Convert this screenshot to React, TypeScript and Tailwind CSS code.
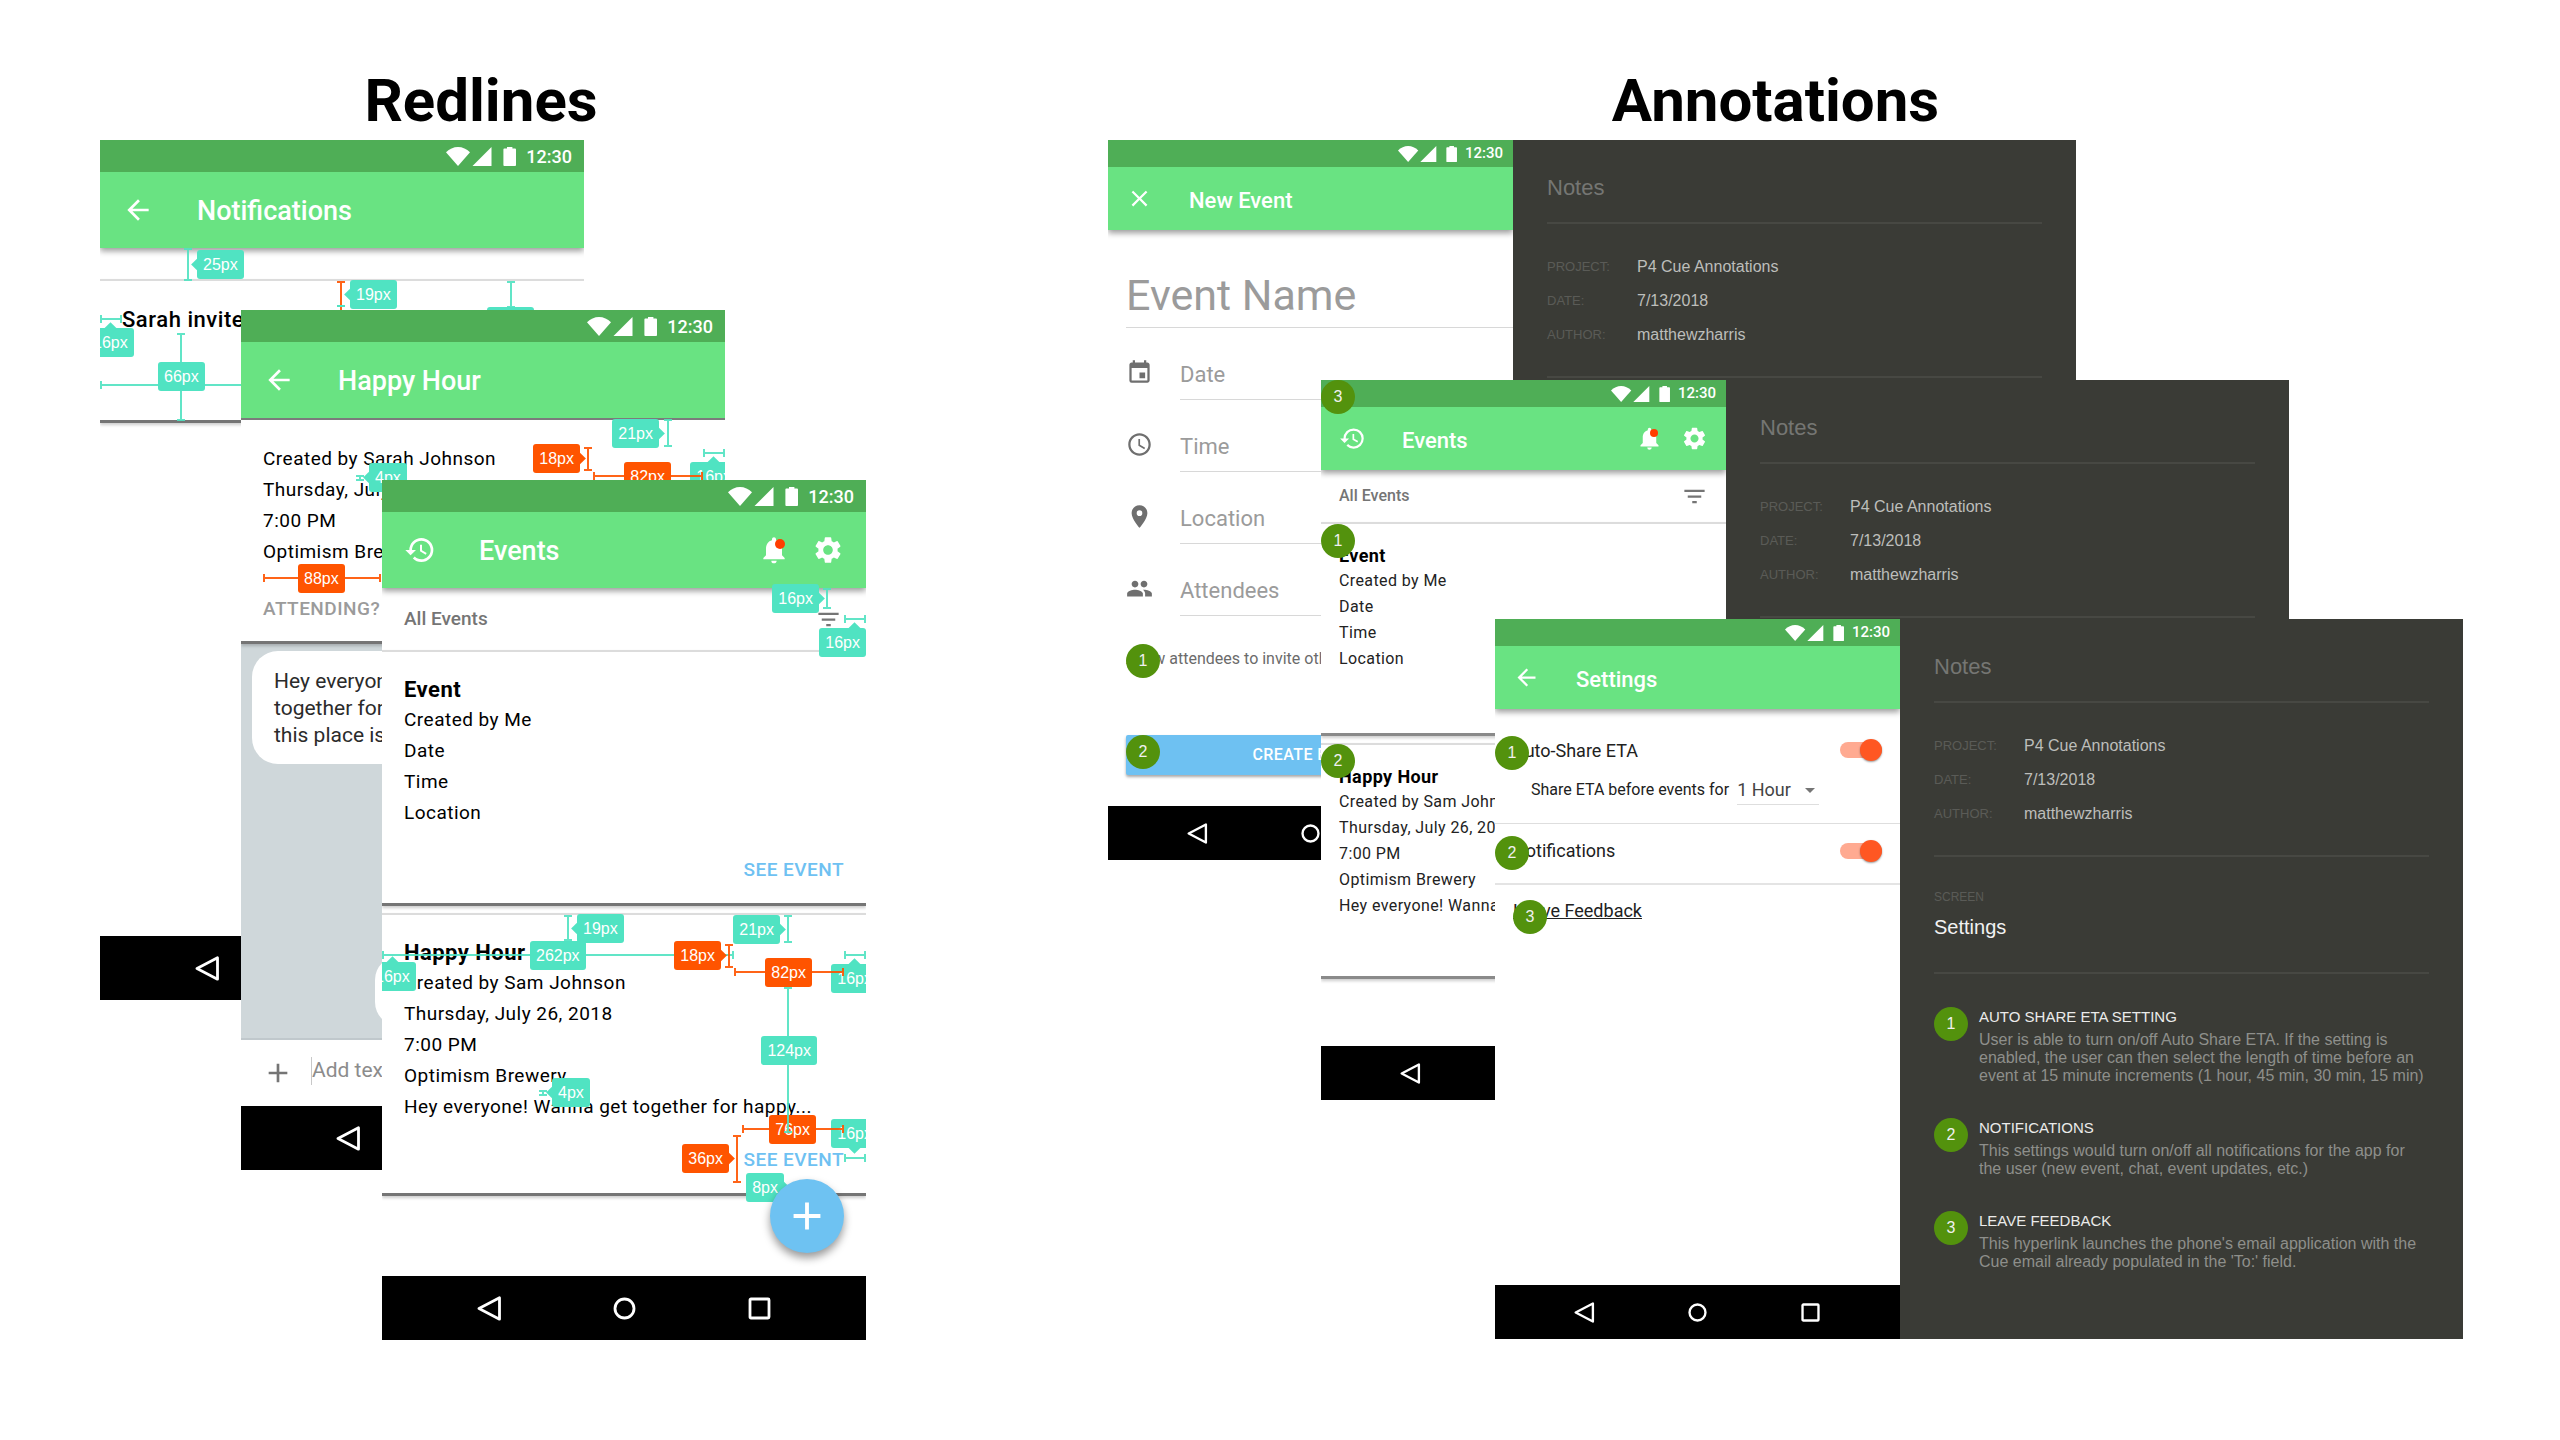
import type { ReactNode } from "react";
import {
  MdAccessTime,
  MdAdd,
  MdArrowBack,
  MdClose,
  MdEvent,
  MdFilterList,
  MdHistory,
  MdLocationOn,
  MdNotifications,
  MdPeople,
  MdSettings,
} from "react-icons/md";

type Size = "lg" | "sm";
type Tone = "teal" | "orange";
type Arrow = "none" | "left" | "right" | "up" | "upEnd" | "down";

/* ---------- Redline measurements ---------- */

const toneBg: Record<Tone, string> = { teal: "bg-[#50e3c2]", orange: "bg-[#ff5400]" };
const toneBorder: Record<Tone, string> = { teal: "border-[#50e3c2]", orange: "border-[#ff5400]" };
const arrowPos: Record<Arrow, string> = {
  none: "hidden",
  left: "-left-1 top-[10px]",
  right: "-right-1 top-[10px]",
  up: "-top-1 left-[19px]",
  upEnd: "-top-1 left-[31px]",
  down: "-bottom-1 left-[19px]",
};

function Tag({ at, tone = "teal", arrow = "none", children }: { at: string; tone?: Tone; arrow?: Arrow; children: ReactNode }) {
  return (
    <span
      className={`absolute flex h-[29px] items-center rounded-[3px] px-[6px] font-['Liberation_Sans',sans-serif] text-[16px] whitespace-nowrap text-white ${toneBg[tone]} ${at}`}
    >
      <span className={`absolute size-[9px] rotate-45 ${toneBg[tone]} ${arrowPos[arrow]}`} />
      <span className="relative">{children}</span>
    </span>
  );
}

function VLine({ at, tone = "teal" }: { at: string; tone?: Tone }) {
  return (
    <span className={`absolute flex w-[8px] justify-center border-y-2 opacity-90 ${toneBorder[tone]} ${at}`}>
      <span className={`w-[2px] ${toneBg[tone]}`} />
    </span>
  );
}

function HLine({ at, tone = "teal" }: { at: string; tone?: Tone }) {
  return (
    <span className={`absolute flex h-[8px] items-center border-x-2 opacity-90 ${toneBorder[tone]} ${at}`}>
      <span className={`h-[2px] w-full ${toneBg[tone]}`} />
    </span>
  );
}

/* ---------- Phone frame ---------- */

function StatusIcons({ size }: { size: Size }) {
  return (
    <svg viewBox="0 0 70 19" fill="white" className={size === "lg" ? "h-[19px] w-[70px]" : "h-[16px] w-[59px]"} aria-hidden="true">
      <path d="M0 5.2C3.4 2 7.5 0 12 0s8.600 2 12 5.200L12 19Z" />
      <path d="M45.500 0V19H26.500Z" />
      <path d="M58.300 1.600h2.700V0h5.400v1.600h2.700q.9 0 .9.9V18q0 1-.9 1H58.300q-.9 0-.9-1V2.500q0-.9.9-.9Z" />
    </svg>
  );
}

function Header({ size, title, icon, actions, flat }: { size: Size; title: string; icon: ReactNode; actions?: ReactNode; flat?: boolean }) {
  const lg = size === "lg";
  return (
    <header className={`relative shrink-0 ${flat ? "border-b-2 border-[#7c7c7c]" : "shadow-[0_3px_6px_rgba(0,0,0,0.4)]"}`}>
      <div
        className={`flex items-center justify-end bg-[#4fae56] font-medium text-white ${
          lg ? "h-8 gap-[10px] pr-3 text-[18px]" : "h-[27px] gap-2 pr-[10px] text-[15px]"
        }`}
      >
        <StatusIcons size={size} />
        <span>12:30</span>
      </div>
      <div className={`flex items-center bg-[#69e382] text-white ${lg ? "h-[76px] px-[22px]" : "h-[63px] px-[18px]"}`}>
        <button type="button" aria-label="Navigate" className={lg ? "text-[32px]" : "text-[27px]"}>
          {icon}
        </button>
        <h3 className={`flex-1 pt-[3px] font-medium ${lg ? "ml-[43px] text-[27px]" : "ml-9 text-[22px]"}`}>{title}</h3>
        {actions}
      </div>
    </header>
  );
}

function NavBar({ size }: { size: Size }) {
  const lg = size === "lg";
  const icon = lg ? "size-[25px]" : "size-[21px]";
  return (
    <nav className={`mt-auto flex shrink-0 items-center justify-center bg-black ${lg ? "h-16 gap-[110px]" : "h-[54px] gap-[92px]"}`}>
      <button type="button" aria-label="Back">
        <svg viewBox="0 0 25 25" className={icon} fill="none" stroke="white" strokeWidth="2.800" strokeLinejoin="round">
          <path d="M22.500 1.800V23.200L2 12.500Z" />
        </svg>
      </button>
      <button type="button" aria-label="Home">
        <svg viewBox="0 0 25 25" className={icon} fill="none" stroke="white" strokeWidth="2.800">
          <circle cx="12.500" cy="12.500" r="9.500" />
        </svg>
      </button>
      <button type="button" aria-label="Recent apps">
        <svg viewBox="0 0 25 25" className={icon} fill="none" stroke="white" strokeWidth="2.800">
          <rect x="3" y="3" width="19" height="19" rx="1" />
        </svg>
      </button>
    </nav>
  );
}

function Phone({ size, children }: { size: Size; children: ReactNode }) {
  return (
    <section className="relative flex h-full w-full min-w-0 flex-col overflow-hidden bg-white">
      {children}
      <NavBar size={size} />
    </section>
  );
}

/* ---------- Events screen ---------- */

function EventCard({ size, title, lines, className }: { size: Size; title: string; lines: string[]; className: string }) {
  const lg = size === "lg";
  return (
    <article
      className={`flex flex-col border-t-2 border-t-[#dcdcdc] bg-white tracking-wide shadow-[0_2px_3px_rgba(0,0,0,0.2)] ${
        lg
          ? "border-b-[3px] border-b-[#757575] px-[22px] pt-6 pb-4 text-[19px] leading-[31px] text-black"
          : "border-b-[3px] border-b-[#8a8a8a] px-[18px] pt-5 pb-3 text-[16px] leading-[26px] text-[#222]"
      } ${className}`}
    >
      <h4 className={`font-bold text-black ${lg ? "text-[22px] leading-7" : "text-[18px] leading-6"}`}>{title}</h4>
      {lines.map((line) => (
        <p key={line} className="whitespace-nowrap">
          {line}
        </p>
      ))}
      <button type="button" className={`mt-auto self-end font-medium text-[#6ec1f2] ${lg ? "h-9" : "h-[30px]"}`}>
        SEE EVENT
      </button>
    </article>
  );
}

function EventsScreen({ size, children }: { size: Size; children: ReactNode }) {
  const lg = size === "lg";
  return (
    <Phone size={size}>
      <Header
        size={size}
        title="Events"
        icon={<MdHistory />}
        actions={
          <div className={`flex ${lg ? "gap-[22px] text-[32px]" : "gap-[18px] text-[27px]"}`}>
            <button type="button" aria-label="Notifications" className="relative">
              <MdNotifications />
              <span
                className={`absolute rounded-full bg-[#ff3d00] ${lg ? "top-[5px] right-[5px] size-[10px]" : "top-1 right-[5px] size-2"}`}
              />
            </button>
            <button type="button" aria-label="Settings">
              <MdSettings />
            </button>
          </div>
        }
      />
      <div
        className={`flex items-center justify-between font-medium text-[#757575] ${
          lg ? "h-[62px] pr-6 pl-[22px] text-[19px]" : "h-[52px] px-[18px] text-[16px]"
        }`}
      >
        <span>All Events</span>
        <button type="button" aria-label="Filter" className="text-[27px]">
          <MdFilterList />
        </button>
      </div>
      <EventCard
        size={size}
        title="Event"
        lines={["Created by Me", "Date", "Time", "Location"]}
        className={lg ? "h-[256px]" : "h-[214px]"}
      />
      <EventCard
        size={size}
        title="Happy Hour"
        lines={[
          "Created by Sam Johnson",
          "Thursday, July 26, 2018",
          "7:00 PM",
          "Optimism Brewery",
          "Hey everyone! Wanna get together for happy...",
        ]}
        className={lg ? "mt-[7px] h-[283px]" : "mt-[7px] h-[236px]"}
      />
      {children}
    </Phone>
  );
}

function EventsRedlines() {
  return (
    <>
      <VLine at="right-[35px] top-[108px] h-[21px]" />
      <Tag at="right-[47px] top-[104px]" arrow="right">16px</Tag>
      <HLine at="right-0 top-[135px] w-[22px]" />
      <Tag at="right-0 top-[148px]" arrow="upEnd">16px</Tag>

      <HLine at="left-0 top-[471px] w-[352px]" />
      <Tag at="-left-[13px] top-[482px]" arrow="up">16px</Tag>
      <VLine at="left-[182px] top-[435px] h-[26px]" />
      <Tag at="left-[195px] top-[434px]" arrow="left">19px</Tag>
      <Tag at="left-[148px] top-[461px]">262px</Tag>

      <VLine at="right-[74px] top-[435px] h-[28px]" />
      <Tag at="right-[86px] top-[435px]" arrow="right">21px</Tag>
      <VLine at="right-[133px] top-[464px] h-[24px]" tone="orange" />
      <Tag at="right-[145px] top-[461px]" tone="orange" arrow="right">18px</Tag>
      <HLine at="right-0 top-[471px] w-[22px]" />
      <Tag at="-right-[12px] top-[484px]" arrow="up">16px</Tag>
      <HLine at="right-[22px] top-[488px] w-[110px]" tone="orange" />
      <Tag at="right-[54px] top-[478px]" tone="orange">82px</Tag>

      <Tag at="left-[170px] top-[598px]" arrow="left">4px</Tag>
      <VLine at="left-[157px] top-[610px] h-[6px]" />

      <Tag at="-right-[12px] top-[639px]" arrow="down">16px</Tag>
      <HLine at="right-[22px] top-[645px] w-[102px]" tone="orange" />
      <Tag at="right-[50px] top-[635px]" tone="orange">76px</Tag>
      <VLine at="right-[74px] top-[507px] h-[146px]" />
      <Tag at="right-[49px] top-[556px]">124px</Tag>
      <HLine at="right-0 top-[674px] w-[22px]" />
      <VLine at="right-[125px] top-[655px] h-[48px]" tone="orange" />
      <Tag at="right-[137px] top-[664px]" tone="orange" arrow="right">36px</Tag>
      <Tag at="right-[82px] top-[693px]" arrow="right">8px</Tag>

      <button
        type="button"
        aria-label="Add event"
        className="absolute top-[699px] right-[22px] flex size-[74px] items-center justify-center rounded-full bg-[#6ec2f2] text-[46px] text-white shadow-[0_5px_8px_rgba(0,0,0,0.4)]"
      >
        <MdAdd />
      </button>
    </>
  );
}

/* ---------- Notifications screen ---------- */

function NotificationsScreen() {
  return (
    <Phone size="lg">
      <Header size="lg" title="Notifications" icon={<MdArrowBack />} />
      <article className="mt-[31px] h-[144px] border-t-2 border-b-[3px] border-t-[#dcdcdc] border-b-[#757575] px-[22px] pt-[25px] shadow-[0_2px_3px_rgba(0,0,0,0.2)]">
        <p className="text-[22px] leading-[28px] font-medium tracking-wide whitespace-nowrap text-black">Sarah invited</p>
      </article>
      <VLine at="left-[84px] top-[108px] h-[33px]" />
      <Tag at="left-[97px] top-[110px]" arrow="left">25px</Tag>
      <VLine at="left-[237px] top-[141px] h-[60px]" tone="orange" />
      <span className="absolute top-[165px] left-[237px] h-[2px] w-[8px] bg-[#50e3c2]" />
      <Tag at="left-[250px] top-[140px]" arrow="left">19px</Tag>
      <VLine at="right-[69px] top-[141px] h-[27px]" />
      <Tag at="right-[50px] top-[167px]">21px</Tag>
      <HLine at="left-0 top-[175px] w-[22px]" />
      <Tag at="-left-[13px] top-[188px]" arrow="up">16px</Tag>
      <HLine at="left-0 top-[241px] w-[352px]" />
      <VLine at="left-[77px] top-[193px] h-[88px]" />
      <Tag at="left-[58px] top-[222px]">66px</Tag>
    </Phone>
  );
}

/* ---------- Happy Hour chat screen ---------- */

function ChatScreen() {
  return (
    <Phone size="lg">
      <Header size="lg" title="Happy Hour" icon={<MdArrowBack />} flat />
      <article className="z-10 h-[224px] border-b-[3px] border-[#757575] px-[22px] pt-[23px] text-[19px] leading-[31px] tracking-wide whitespace-nowrap text-black shadow-[0_2px_3px_rgba(0,0,0,0.2)]">
        <p>Created by Sarah Johnson</p>
        <p>Thursday, July 26, 2018</p>
        <p>7:00 PM</p>
        <p>Optimism Brewery</p>
        <p className="pt-[26px] font-medium text-[#9b9b9b]">ATTENDING?</p>
      </article>
      <div className="flex flex-1 flex-col border-b-2 border-[#c0c8cc] bg-[#cfd7da] pt-[7px] pr-[11px] pb-[12px] pl-[11px]">
        <p className="w-[340px] rounded-[26px] bg-white px-[22px] pt-[17px] pb-[15px] text-[21px] leading-[27px] text-[#2b2b2b]">
          Hey everyone! Want to get
          <br />
          together for happy hour?
          <br />
          this place is great!
        </p>
        <div className="mt-auto h-[70px] w-[339px] self-end rounded-[24px] bg-white" />
      </div>
      <form className="flex h-[66px] items-center pl-[21px]">
        <button type="button" aria-label="Attach" className="text-[32px] text-[#757575]">
          <MdAdd />
        </button>
        <input
          type="text"
          aria-label="Message"
          placeholder="Add text..."
          className="mb-1 ml-[17px] h-7 min-w-0 flex-1 border-l border-[#c8c8c8] bg-transparent text-[21px] placeholder:text-[#8c8c8c]"
        />
      </form>

      <div className="absolute inset-0 z-20">
        <VLine at="right-[53px] top-[109px] h-[28px]" />
        <Tag at="right-[66px] top-[109px]" arrow="right">21px</Tag>
        <VLine at="right-[133px] top-[137px] h-[24px]" tone="orange" />
        <Tag at="right-[145px] top-[134px]" tone="orange" arrow="right">18px</Tag>
        <Tag at="-right-[12px] top-[152px]" arrow="up">16px</Tag>
        <HLine at="right-[22px] top-[162px] w-[110px]" tone="orange" />
        <Tag at="right-[54px] top-[152px]" tone="orange">82px</Tag>
        <HLine at="right-0 top-[139px] w-[22px]" />
        <VLine at="left-[115px] top-[165px] h-[6px]" />
        <Tag at="left-[128px] top-[153px]" arrow="left">4px</Tag>
        <HLine at="left-[22px] top-[264px] w-[118px]" tone="orange" />
        <Tag at="left-[57px] top-[254px]" tone="orange">88px</Tag>
      </div>
    </Phone>
  );
}

/* ---------- Annotated screens ---------- */

function Pin({ className = "", children }: { className?: string; children: ReactNode }) {
  return (
    <span
      className={`flex size-[34px] shrink-0 items-center justify-center rounded-full bg-[#53920d] font-['Liberation_Sans',sans-serif] text-[16px] text-[#f0f0f0] ${className}`}
    >
      {children}
    </span>
  );
}

const fields = [
  { label: "Date", icon: <MdEvent /> },
  { label: "Time", icon: <MdAccessTime /> },
  { label: "Location", icon: <MdLocationOn /> },
  { label: "Attendees", icon: <MdPeople /> },
];

function NewEventScreen() {
  return (
    <Phone size="sm">
      <Header size="sm" title="New Event" icon={<MdClose />} />
      <form className="flex flex-col pl-[18px]">
        <input
          type="text"
          aria-label="Event Name"
          placeholder="Event Name"
          className="mt-9 h-[62px] w-full border-b border-[#d8d8d8] pb-[3px] text-[43px] placeholder:text-[#9b9b9b]"
        />
        {fields.map((field) => (
          <label key={field.label} className="flex h-[72px] items-end gap-[27px]">
            <span className="pb-[14px] text-[27px] text-[#6f6f6f]">{field.icon}</span>
            <input
              type="text"
              aria-label={field.label}
              placeholder={field.label}
              className="h-[54px] min-w-0 flex-1 border-b border-[#d8d8d8] pt-[3px] text-[22px] placeholder:text-[#9b9b9b]"
            />
          </label>
        ))}
        <p className="mt-[31px] text-[16px] leading-6 whitespace-nowrap text-[#6b6b6b]">Allow attendees to invite others</p>
        <button
          type="button"
          className="mt-16 mr-[18px] h-10 rounded-[2px] bg-[#6ec1f2] text-[16px] font-medium tracking-wide text-white shadow-[0_2px_3px_rgba(0,0,0,0.35)]"
        >
          CREATE EVENT
        </button>
      </form>
      <Pin className="absolute top-[504px] left-[18px]">1</Pin>
      <Pin className="absolute top-[595px] left-[18px]">2</Pin>
    </Phone>
  );
}

function Switch({ label }: { label: string }) {
  return (
    <input
      type="checkbox"
      role="switch"
      aria-label={label}
      defaultChecked
      className="relative h-4 w-[42px] appearance-none rounded-full bg-[#ffaa91] before:absolute before:-top-[3px] before:right-0 before:size-[22px] before:rounded-full before:bg-[#ff5722] before:shadow-[0_1px_2px_rgba(0,0,0,0.4)] before:content-['']"
    />
  );
}

function SettingsScreen() {
  return (
    <Phone size="sm">
      <Header size="sm" title="Settings" icon={<MdArrowBack />} />
      <div className="flex flex-col text-[18px] text-[#212121]">
        <div className="h-[115px] border-b border-[#dedede] px-[18px] pt-5">
          <div className="flex h-[42px] items-center justify-between">
            <span>Auto-Share ETA</span>
            <Switch label="Auto-Share ETA" />
          </div>
          <div className="mt-1 flex h-[30px] items-center pl-[18px]">
            <label htmlFor="eta" className="text-[16px] whitespace-nowrap">
              Share ETA before events for
            </label>
            <span className="relative ml-2 flex w-[82px] items-center">
              <select
                id="eta"
                defaultValue="1 Hour"
                className="h-[30px] w-full appearance-none border-b border-[#dedede] bg-transparent text-[#444]"
              >
                <option>1 Hour</option>
                <option>45 min</option>
                <option>30 min</option>
                <option>15 min</option>
              </select>
              <svg viewBox="0 0 10 5" className="pointer-events-none absolute right-1 h-[5px] w-[10px]" fill="#757575" aria-hidden="true">
                <path d="M0 0h10L5 5Z" />
              </svg>
            </span>
          </div>
        </div>
        <div className="flex h-[61px] items-center justify-between border-b-2 border-[#e4e4e4] px-[18px] pb-[6px]">
          <span>Notifications</span>
          <Switch label="Notifications" />
        </div>
        <a href="#feedback" className="mt-[14px] ml-[18px] self-start leading-6 underline">
          Leave Feedback
        </a>
      </div>
      <Pin className="absolute top-[117px] left-0">1</Pin>
      <Pin className="absolute top-[217px] left-0">2</Pin>
      <Pin className="absolute top-[281px] left-[18px]">3</Pin>
    </Phone>
  );
}

const meta = [
  ["PROJECT:", "P4 Cue Annotations"],
  ["DATE:", "7/13/2018"],
  ["AUTHOR:", "matthewzharris"],
];

function Notes({ children }: { children?: ReactNode }) {
  return (
    <aside className="min-w-0 bg-[#3a3b36] px-[34px] font-['Liberation_Sans',sans-serif]">
      <h3 className="border-b-2 border-[#474843] pt-9 pb-[22px] text-[22px] leading-6 text-[#757673]">Notes</h3>
      <dl className="border-b-2 border-[#474843] pt-[26px] pb-6 leading-[34px]">
        {meta.map(([term, value]) => (
          <div key={term} className="flex">
            <dt className="w-[90px] text-[13px] text-[#5a5b57]">{term}</dt>
            <dd className="text-[16px] text-[#bdbebb]">{value}</dd>
          </div>
        ))}
      </dl>
      {children}
    </aside>
  );
}

const notes = [
  {
    title: "AUTO SHARE ETA SETTING",
    lines: [
      "User is able to turn on/off Auto Share ETA. If the setting is",
      "enabled, the user can then select the length of time before an",
      "event at 15 minute increments (1 hour, 45 min, 30 min, 15 min)",
    ],
  },
  {
    title: "NOTIFICATIONS",
    lines: ["This settings would turn on/off all notifications for the app for", "the user (new event, chat, event updates, etc.)"],
  },
  {
    title: "LEAVE FEEDBACK",
    lines: ["This hyperlink launches the phone's email application with the", "Cue email already populated in the 'To:' field."],
  },
];

function SettingsNotes() {
  return (
    <Notes>
      <div className="border-b-2 border-[#474843] pt-8 pb-[33px]">
        <p className="text-[12px] leading-4 text-[#5a5b57]">SCREEN</p>
        <p className="mt-[10px] text-[20px] leading-6 text-[#f2f2f2]">Settings</p>
      </div>
      <ol className="flex flex-col gap-[33px] pt-[33px]">
        {notes.map((note, index) => (
          <li key={note.title} className="flex gap-[11px]">
            <Pin>{index + 1}</Pin>
            <div className="whitespace-nowrap">
              <h4 className="text-[15px] leading-5 text-[#ebebea]">{note.title}</h4>
              <p className="mt-1 text-[16px] leading-[18px] text-[#8e8f8b]">
                {note.lines.map((line) => (
                  <span key={line} className="block">
                    {line}
                  </span>
                ))}
              </p>
            </div>
          </li>
        ))}
      </ol>
    </Notes>
  );
}

const pair = "grid min-w-0 grid-cols-[minmax(0,405fr)_minmax(0,563fr)]";

export default function App() {
  return (
    <main className="grid min-h-screen grid-cols-[minmax(0,766fr)_minmax(0,1355fr)] gap-[242px] bg-white pt-[71px] pr-[97px] pb-[100px] pl-[100px] font-[Roboto,sans-serif]">
      <section>
        <h2 className="mb-[9px] pr-1 text-center text-[60px] leading-[60px] font-bold text-black">Redlines</h2>
        <div className="grid grid-cols-[141fr_141fr_202fr_141fr_141fr] grid-rows-[170px_170px_520px_170px_170px]">
          <div className="col-start-1 col-end-4 row-start-1 row-end-4">
            <NotificationsScreen />
          </div>
          <div className="z-10 col-start-2 col-end-5 row-start-2 row-end-5">
            <ChatScreen />
          </div>
          <div className="z-20 col-start-3 col-end-6 row-start-3 row-end-6">
            <EventsScreen size="lg">
              <EventsRedlines />
            </EventsScreen>
          </div>
        </div>
      </section>

      <section>
        <h2 className="mb-[9px] pr-5 text-center text-[60px] leading-[60px] font-bold text-black">Annotations</h2>
        <div className="grid grid-cols-[213fr_174fr_581fr_213fr_174fr] grid-rows-[240px_239px_241px_240px_239px]">
          <div className={`col-start-1 col-end-4 row-start-1 row-end-4 ${pair}`}>
            <NewEventScreen />
            <div className="grid grid-rows-[240px]">
              <Notes />
            </div>
          </div>
          <div className={`z-10 col-start-2 col-end-5 row-start-2 row-end-5 ${pair}`}>
            <EventsScreen size="sm">
              <Pin className="absolute top-0 left-0">3</Pin>
              <Pin className="absolute top-[144px] left-0">1</Pin>
              <Pin className="absolute top-[364px] left-0">2</Pin>
            </EventsScreen>
            <div className="grid grid-rows-[240px]">
              <Notes />
            </div>
          </div>
          <div className={`z-20 col-start-3 col-end-6 row-start-3 row-end-6 ${pair}`}>
            <SettingsScreen />
            <SettingsNotes />
          </div>
        </div>
      </section>
    </main>
  );
}
